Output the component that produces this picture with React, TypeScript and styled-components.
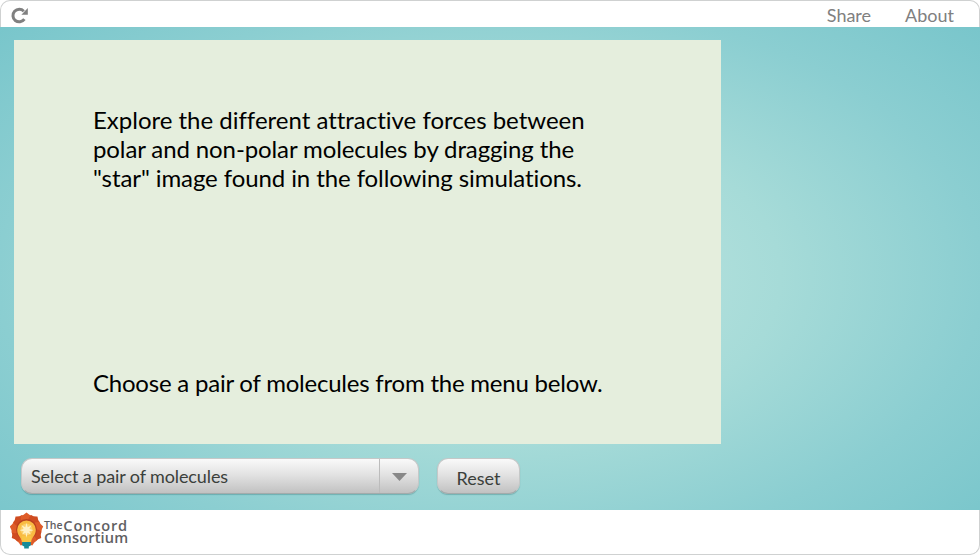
import React from "react";
import styled, { createGlobalStyle } from "styled-components";

const GlobalStyle = createGlobalStyle`
  * { box-sizing: border-box; }
  body { margin: 0; font-family: Lato, sans-serif; font-variant-ligatures: none; overflow: hidden; }
`;

const Page = styled.div`
  display: flex;
  flex-direction: column;
  width: 980px;
  height: 555px;
  background: radial-gradient(ellipse farthest-corner at center, #c5e8e3 0%, #a6dbd8 42%, #8bced1 71%, #75c4ca 100%);
`;

const Bar = styled.div<{ $edge: "top" | "bottom" }>`
  display: flex;
  align-items: center;
  flex: none;
  background: #fff;
  border: 1px solid #cfd1d1;
  ${({ $edge }) =>
    $edge === "top"
      ? "height: 27px; border-bottom: 0; border-radius: 10px 10px 0 0; padding: 2px 25px 0 10px; justify-content: space-between;"
      : "height: 45px; border-top: 0; border-radius: 0 0 10px 10px; padding: 0 9px;"}
`;

const Corners = styled.div`
  background: #fff;
  flex: none;
`;

const IconButton = styled.button`
  display: flex;
  padding: 0;
  border: 0;
  background: none;
`;

const Links = styled.nav`
  display: flex;
  gap: 34px;
`;

const NavLink = styled.a`
  color: #808080;
  font-size: 18px;
  line-height: 22px;
`;

const Main = styled.main`
  flex: 1;
  padding: 13px 14px 0;
`;

const Panel = styled.section`
  display: flex;
  flex-direction: column;
  justify-content: space-between;
  width: 707px;
  height: 404px;
  padding: 65px 79px 47px;
  background: #e5eedd;
`;

const Message = styled.p`
  margin: 0;
  color: #000;
  font-size: 24px;
  line-height: 29px;
  white-space: nowrap;
`;

const Line = styled.span<{ $spacing: number }>`
  display: block;
  letter-spacing: ${({ $spacing }) => $spacing}px;
`;

const Controls = styled.div`
  display: flex;
  gap: 18px;
  padding: 14px 7px 0;
`;

const Control = styled.button`
  display: flex;
  align-items: stretch;
  height: 36px;
  padding: 0;
  border: 1px solid #c5c8c8;
  border-bottom-color: #a3abab;
  border-radius: 11px;
  background: linear-gradient(#fafafa, #e0e0e0 50%, #c1c1c1);
  box-shadow: 0 1px 1px rgba(0, 70, 75, 0.25);
  color: #3b403b;
  font: 18px/22px Lato, sans-serif;
`;

const SelectControl = styled(Control)`
  width: 398px;
`;

const ResetControl = styled(Control)`
  width: 83px;
  justify-content: center;
  padding-top: 8px;
`;

const SelectLabel = styled.span`
  flex: 1;
  padding: 6px 0 0 9px;
  text-align: left;
  letter-spacing: -0.11px;
`;

const Arrow = styled.span`
  display: flex;
  align-items: center;
  justify-content: center;
  width: 39px;
  padding-top: 1px;
  border-left: 1px solid #bcbcbc;
`;

const petals = Array.from({ length: 9 }, (_, i) => -160 + i * 40);

const ReloadIcon = () => (
  <svg width="18" height="17" viewBox="0 0 18 17">
    <path d="M13.400 12.200A6.300 6.300 0 1 1 12.800 4.200" fill="none" stroke="#808080" strokeWidth="3" />
    <path d="M16.800 1v6.800h-6.400z" fill="#808080" />
  </svg>
);

const LogoRow = styled.div`
  display: flex;
  align-items: flex-start;
`;

const Wordmark = styled.div`
  display: flex;
  flex-direction: column;
  margin-top: 7px;
  color: #5f6062;
  font: 600 14.6px/12px "Open Sans", sans-serif;
  white-space: nowrap;
`;

const TopWord = styled.div`
  display: flex;
  height: 12px;
  gap: 1px;
  letter-spacing: 0.8px;
`;

const SmallWord = styled.span`
  font-size: 10.5px;
  letter-spacing: -0.1px;
`;

const BottomWord = styled.div`
  letter-spacing: 0.15px;
`;

const LogoMark = () => (
  <svg width="34" height="40" viewBox="0 0 34 40">
    <g transform="translate(16.500 17.500)">
      {petals.map((a, i) => (
        <path
          key={a}
          transform={`rotate(${a})`}
          d="M-3.500 -6Q-6.500 -10 -5.500 -14Q-2.500 -14.500 0 -17Q2.500 -14.500 5.500 -14Q6.500 -10 3.500 -6Z"
          fill={i % 2 ? "#cf4c21" : "#df5c29"}
        />
      ))}
      <circle r="10.500" fill="#b9411f" />
    </g>
    <path d="M16.500 8.500a9.300 9.300 0 0 0-9.300 9.300c0 6 4 7 4.700 12.400h9.200c.7-5.400 4.700-6.400 4.700-12.400a9.300 9.300 0 0 0-9.300-9.300z" fill="#f9bb42" />
    <path d="M12 24h9v6h-9z" fill="#f9c545" />
    <circle cx="16.500" cy="17.500" r="6" fill="#fbd06d" />
    <path d="M16.500 11l1.200 4.300 3.800-2-2.100 3.700 4 1.200-4.200 1.100 1.500 3.200-3.200-1.700-1 5-1-5-3.200 1.700 1.500-3.200-4.200-1.100 4-1.200-2.100-3.700 3.800 2z" fill="#fff1c5" />
    <path d="M12.200 30h8.600v3.500l-2 1v2h-4.600v-2l-2-1z" fill="#168b99" />
  </svg>
);

export default function App() {
  return (
    <>
      <GlobalStyle />
      <Page>
        <Corners>
          <Bar $edge="top">
            <IconButton aria-label="Reload"><ReloadIcon /></IconButton>
            <Links>
              <NavLink>Share</NavLink>
              <NavLink>About</NavLink>
            </Links>
          </Bar>
        </Corners>
        <Main>
          <Panel>
            <Message>
              <Line $spacing={-0.01}>Explore the different attractive forces between</Line>
              <Line $spacing={-0.11}>polar and non-polar molecules by dragging the</Line>
              <Line $spacing={-0.09}>"star" image found in the following simulations.</Line>
            </Message>
            <Message>
              <Line $spacing={-0.22}>Choose a pair of molecules from the menu below.</Line>
            </Message>
          </Panel>
          <Controls>
            <SelectControl>
              <SelectLabel>Select a pair of molecules</SelectLabel>
              <Arrow>
                <svg width="15" height="8" viewBox="0 0 15 8"><path d="M0 0h15L7.500 8z" fill="#888" /></svg>
              </Arrow>
            </SelectControl>
            <ResetControl>Reset</ResetControl>
          </Controls>
        </Main>
        <Corners>
          <Bar $edge="bottom">
            <LogoRow>
              <LogoMark />
              <Wordmark>
                <TopWord><SmallWord>The</SmallWord>Concord</TopWord>
                <BottomWord>Consortium</BottomWord>
              </Wordmark>
            </LogoRow>
          </Bar>
        </Corners>
      </Page>
    </>
  );
}
